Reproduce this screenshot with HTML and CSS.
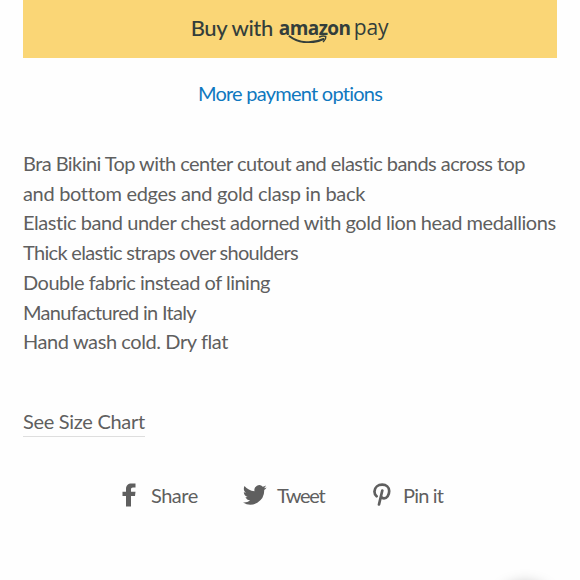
FILE: index.html
```html
<!DOCTYPE html>
<html lang="en">
<head>
  <meta charset="UTF-8" />
  <meta name="viewport" content="width=device-width, initial-scale=1.0"/>
  <title>Bra Bikini Top</title>
  <link rel="stylesheet" href="styles.css">
</head>
<body>
  <main class="product">
    <button class="pay-button" type="button">
      <span class="pay-label">Buy with</span>
      <span class="pay-logo">
        <span class="logo-amazon">amazon</span>
        <span class="logo-pay">pay</span>
        <svg class="logo-smile" width="50" height="30" viewBox="0 0 50 30">
          <path d="M10.500 23.300C20 30.500 34 31 44.500 26" fill="none" stroke="#333e3b" stroke-width="2" stroke-linecap="round"/>
          <path d="M40.500 24Q44 22.400 46.800 23.500Q47.200 26.200 44.400 28.600" fill="none" stroke="#333e3b" stroke-width="1.400" stroke-linecap="round"/>
        </svg>
      </span>
    </button>

    <a class="more-options" href="#">More payment options</a>

    <div class="description">
      <p class="line-top">Bra Bikini Top with center cutout and elastic bands across top</p>
      <p class="line-clasp">and bottom edges and gold clasp in back</p>
      <p class="line-band">Elastic band under chest adorned with gold lion head medallions</p>
      <p class="line-straps">Thick elastic straps over shoulders</p>
      <p class="line-fabric">Double fabric instead of lining</p>
      <p class="line-made">Manufactured in Italy</p>
      <p class="line-wash">Hand wash cold. Dry flat</p>
    </div>

    <a class="size-chart" href="#">See Size Chart</a>

    <div class="social">
      <a class="share share-facebook" href="#">
        <svg width="14" height="24" viewBox="0 0 14 24"><path d="M4 23.500V13H.5V8.800H4V6.200C4 2.400 6 .5 9.600.5H13.500v4h-2.500C9.500 4.500 9 5.200 9 6.600V8.800h4.500L13 13H9v10.500z"/></svg>
        <span>Share</span>
      </a>
      <a class="share share-twitter" href="#">
        <svg width="24" height="20" viewBox="0 0 24 20"><path d="M23.600 2.400c-.9.4-1.800.7-2.800.8 1-.6 1.800-1.600 2.100-2.700-.9.6-2 1-3.100 1.200A4.900 4.900 0 0 0 11.500 6.200C7.400 6 3.900 4.100 1.500 1.100.2 3.400.8 6.200 3 7.700c-.8 0-1.600-.2-2.200-.6 0 2.300 1.600 4.400 3.900 4.900-.7.2-1.500.2-2.200.1.600 2 2.400 3.300 4.600 3.400A9.900 9.900 0 0 1 0 17.500a13.900 13.900 0 0 0 21.200-12.400c.9-.7 1.800-1.700 2.400-2.700z"/></svg>
        <span>Tweet</span>
      </a>
      <a class="share share-pinterest" href="#">
        <svg width="18" height="24" viewBox="0 0 18 24"><path class="pin-stroke" d="M3.600 13.200C1.900 11.800 1.400 10.200 1.500 8.300 1.800 4.300 5 1.700 9.200 1.700c4.100 0 7 2.600 7 6.300 0 4.200-2.300 7.300-5.200 7.300-1.400 0-2.300-.7-2.700-1.500M9.300 7.500L6 21.500"/></svg>
        <span>Pin it</span>
      </a>
    </div>
  </main>

  <!-- chat launcher, just below the fold -->
  <div class="chat-launcher"></div>
</body>
</html>
```

FILE: styles.css
```css
* {
  box-sizing: border-box;
}
body {
  margin: 0;
  height: 580px;
  overflow: hidden;
  background-color: #fefefe;
  color: #5f5f5f;
  font-family: Lato, "Liberation Sans", sans-serif;
  font-size: 20px;
}
a {
  color: inherit;
  text-decoration: none;
}
.product {
  display: flex;
  flex-direction: column;
  padding: 0 23px;
}
.pay-button {
  display: flex;
  justify-content: center;
  gap: 6px;
  height: 58px;
  padding: 13px 1px 0 0;
  border: 0;
  background-color: #fad676;
  color: #333e3b;
  font: 500 22px/30px Lato, "Liberation Sans", sans-serif;
  text-align: left;
  white-space: nowrap;
}
.pay-label {
  letter-spacing: -0.4px;
}
.pay-logo {
  position: relative;
  display: flex;
}
.logo-amazon {
  width: 75px;
  font: 700 19px/30px "Open Sans", sans-serif;
  letter-spacing: -0.6px;
}
.logo-pay {
  font: 400 21px/28px "Open Sans", sans-serif;
  letter-spacing: -0.2px;
}
/* the arrow runs under the wordmark */
.logo-smile {
  position: absolute;
  left: 0;
  top: 0;
}
.more-options {
  align-self: center;
  margin-top: 20px;
  line-height: 30px;
  letter-spacing: -0.75px;
  color: #0f78bf;
}
.description {
  margin-top: 41px;
  line-height: 29.7px;
  white-space: nowrap;
}
.description p {
  margin: 0;
}
.line-top { letter-spacing: -0.56px; }
.line-clasp { letter-spacing: -0.32px; }
.line-band { letter-spacing: -0.45px; }
.line-straps { letter-spacing: -0.69px; }
.line-fabric { letter-spacing: -0.5px; }
.line-made { letter-spacing: -0.7px; }
.line-wash { letter-spacing: -0.41px; }

.size-chart {
  align-self: flex-start;
  height: 32px;
  margin-top: 48px;
  border-bottom: 1px solid #dedede;
  line-height: 32px;
  letter-spacing: -0.3px;
}
.social {
  display: flex;
  margin: 43px 0 0 99px;
}
.share {
  display: flex;
  align-items: center;
  height: 30px;
}
.share svg {
  fill: #5f5f5f;
}
.share-facebook {
  width: 121px;
  gap: 15px;
  letter-spacing: -0.5px;
}
.share-twitter {
  width: 130px;
  gap: 10px;
  letter-spacing: -1.3px;
}
.share-pinterest {
  gap: 12px;
  letter-spacing: -0.8px;
}
.share .pin-stroke {
  fill: none;
  stroke: #5f5f5f;
  stroke-width: 2.7;
  stroke-linecap: round;
}
.chat-launcher {
  position: fixed;
  left: 492px;
  top: 583px;
  width: 66px;
  height: 66px;
  border-radius: 50%;
  background-color: #fff;
  box-shadow: 0 0 14px rgba(0, 0, 0, 0.25);
}
```
